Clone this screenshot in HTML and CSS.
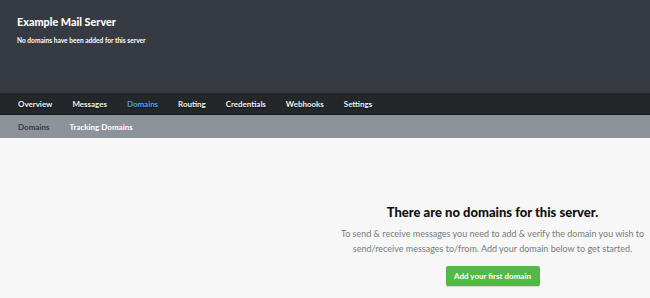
FILE: index.html
```html
<!DOCTYPE html>
<html lang="en">
<head>
  <meta charset="UTF-8">
  <meta name="viewport" content="width=device-width, initial-scale=1.0">
  <title>Example Mail Server - Domains</title>
  <link rel="stylesheet" href="styles.css">
</head>
<body>
  <header class="server-header">
    <h1 class="server-title">Example Mail Server</h1>
    <p class="server-subtitle">No domains have been added for this server</p>
  </header>

  <nav class="main-nav">
    <a href="#">Overview</a>
    <a href="#">Messages</a>
    <a href="#" class="active">Domains</a>
    <a href="#">Routing</a>
    <a href="#">Credentials</a>
    <a href="#">Webhooks</a>
    <a href="#">Settings</a>
  </nav>

  <nav class="sub-nav">
    <a href="#" class="active">Domains</a>
    <a href="#">Tracking Domains</a>
  </nav>

  <main class="content">
    <div class="empty-state">
      <h2>There are no domains for this server.</h2>
      <p>To send &amp; receive messages you need to add &amp; verify the domain you wish to send/receive messages to/from. Add your domain below to get started.</p>
      <a href="#" class="button">Add your first domain</a>
    </div>
  </main>
</body>
</html>
```

FILE: styles.css
```css
:root {
  --header-bg: #363a42;
  --nav-bg: #24272a;
  --subnav-bg: #8c939a;
  --page-bg: #f7f7f7;
  --active-blue: #5aa0e6;
  --green: #52b947;
  --text-muted: #7a7a7a;
}

body {
  margin: 0;
  font-family: Lato, "Open Sans", sans-serif;
  background: var(--page-bg);
  min-height: 100vh;
  display: flex;
  flex-direction: column;
}

a {
  text-decoration: none;
}

.server-header {
  background: var(--header-bg);
  color: white;
  height: 93px;
  padding: 15px 17px 0;
  box-sizing: border-box;
}

.server-title {
  margin: 0;
  font-size: 10.8px;
  font-weight: 900;
  line-height: 14px;
}

.server-subtitle {
  margin: 7px 0 0;
  font-size: 6.6px;
  font-weight: 700;
  line-height: 9px;
}

.main-nav {
  background: var(--nav-bg);
  height: 21px;
  border-bottom: 1px solid #15171a;
  display: flex;
  align-items: center;
  gap: 20px;
  padding: 0 18px;
}

.main-nav a {
  color: #f2f2f2;
  font-size: 7.95px;
  font-weight: 700;
  text-shadow: 0 1px 1px rgba(0, 0, 0, 0.6);
}

.main-nav a.active {
  color: var(--active-blue);
}

.sub-nav {
  background: var(--subnav-bg);
  height: 23px;
  display: flex;
  align-items: center;
  gap: 20px;
  padding: 0 18px;
}

.sub-nav a {
  color: white;
  font-size: 8px;
  font-weight: 700;
}

.sub-nav a.active {
  color: #363a42;
}

.content {
  flex: 1;
  display: flex;
}

.empty-state {
  margin-left: 335px;
  width: 315px;
  padding-top: 66px;
  text-align: center;
}

.empty-state h2 {
  margin: 0;
  font-size: 13px;
  font-weight: 900;
  color: #111;
  line-height: 16px;
}

.empty-state p {
  margin: 6px 0 0;
  font-size: 9px;
  line-height: 15px;
  color: var(--text-muted);
}

.button {
  display: inline-block;
  margin-top: 10px;
  width: 94px;
  height: 20px;
  line-height: 20px;
  background: var(--green);
  border-radius: 2px;
  color: white;
  font-size: 8px;
  font-weight: 700;
  box-shadow: 0 1px 1px rgba(0, 0, 0, 0.15);
}
```
